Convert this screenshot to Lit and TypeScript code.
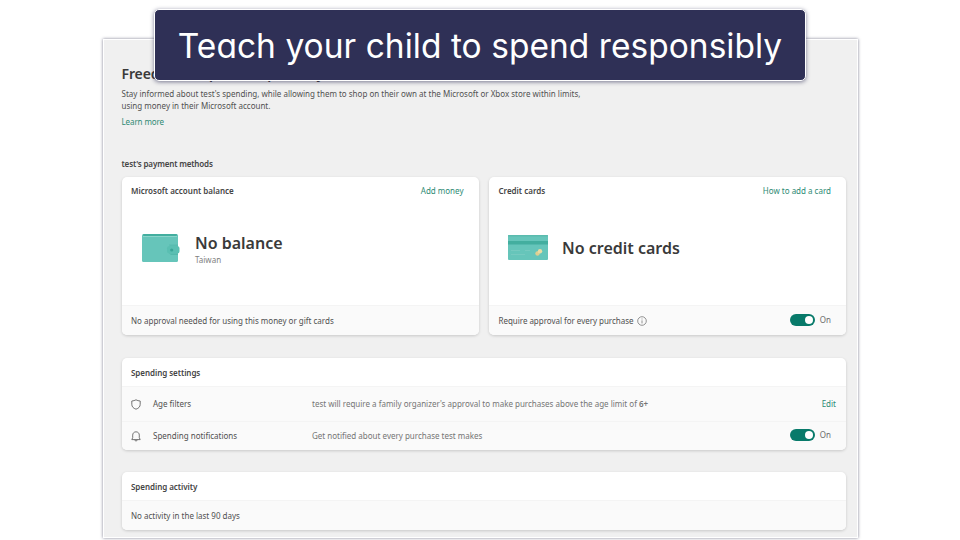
import { css, html, LitElement, svg } from 'lit';
import { customElement, property } from 'lit/decorators.js';

const wallet = svg`
    <svg width="38" height="30" viewBox="0 0 38 30">
        <rect x="0" y="1" width="36" height="28" rx="1.5" fill="#66c5ba"/>
        <rect x="1" y="1" width="34" height="2" rx="1" fill="#43ae9f"/>
        <rect x="1" y="3" width="34" height="1" fill="#8ad5cb"/>
        <path d="M27 11.5h9v2.5h-8z" fill="#58bcb0"/>
        <rect x="25" y="13" width="12.5" height="7.5" rx="2.5" fill="#5abfb2"/>
        <circle cx="29.7" cy="17" r="1.6" fill="#3aa598"/>
        <path d="M27 20.5h9v1.5h-7z" fill="#52b8ab"/>
    </svg>`;

const creditCard = svg`
    <svg width="40" height="25" viewBox="0 0 40 25">
        <rect width="40" height="25" rx="1" fill="#66c5ba"/>
        <rect y="0" width="40" height="1.5" rx=".7" fill="#5abbae"/>
        <rect y="6" width="40" height="3.5" fill="#43ae9f"/>
        <path d="M3 15.5h9M17 15.5h5M3 19.5h14" stroke="#7accc2" stroke-width=".8"/>
        <circle cx="29.5" cy="18.5" r="2.2" fill="#dfcf91"/>
        <circle cx="32" cy="16.2" r="2.2" fill="#eadca4"/>
    </svg>`;

const shield = svg`
    <svg width="10" height="11" viewBox="0 0 10 11" fill="none" stroke="#666" stroke-width=".9">
        <path d="M5 .8C6.2 1.5 7.6 1.9 9.2 2v3.3C9.2 7.7 7.7 9.3 5 10.2 2.3 9.3.8 7.7.8 5.3V2C2.4 1.9 3.8 1.5 5 .8z"/>
    </svg>`;

const bell = svg`
    <svg width="10" height="11" viewBox="0 0 10 11" fill="none" stroke="#666" stroke-width=".9" stroke-linejoin="round">
        <path d="M5 .8C3 .8 1.7 2.3 1.7 4.1v2.6L.8 8.6h8.4l-.9-1.9V4.1C8.3 2.3 7 .8 5 .8z"/>
        <path d="M3.7 8.8c.2.8.6 1.2 1.3 1.2s1.1-.4 1.3-1.2"/>
    </svg>`;

const info = svg`
    <svg width="10" height="10" viewBox="0 0 10 10" fill="none" stroke="#777" stroke-width=".8">
        <circle cx="5" cy="5" r="4.3"/>
        <path d="M5 4.4v3M5 2.5v.9"/>
    </svg>`;

@customElement('app-toggle')
export class AppToggle extends LitElement {

    @property()
    label = 'On';

    static styles = css`
            :host {
                display: flex;
                align-items: center;
                gap: 5px;
                color: #6b6b6b;
            }
            .track {
                display: flex;
                justify-content: flex-end;
                align-items: center;
                width: 24.5px;
                height: 12px;
                padding-right: 2px;
                border-radius: 6px;
                background: #087a6a;
                box-sizing: border-box;
            }
            .knob {
                width: 8px;
                height: 8px;
                border-radius: 50%;
                background: #fff;
            }
            `;

    render() {
        return html`
            <div class="track"><div class="knob"></div></div>
            <span>${this.label}</span>
        `;
    }
}

@customElement('app-root')
export class AppRoot extends LitElement {

    static styles = css`
            :host {
                display: flow-root;
                position: relative;
                width: 960px;
                height: 540px;
                overflow: hidden;
                background: #fff;
                color: #505050;
                font: 8px/12px "Noto Sans", "Open Sans", sans-serif;
                white-space: nowrap;
            }
            .banner {
                position: absolute;
                top: 9px;
                left: 154px;
                display: flex;
                align-items: center;
                justify-content: center;
                width: 652px;
                height: 72px;
                padding-top: 1px;
                border: 1px solid #fff;
                border-radius: 5px;
                background: #2f3056;
                box-shadow: 0 1px 4px rgba(40, 40, 80, .6);
                box-sizing: border-box;
                color: #fff;
                font: 33.5px/44px Inter, sans-serif;
                font-feature-settings: "cv11";
                letter-spacing: .03px;
            }
            .panel {
                width: 755px;
                height: 499px;
                margin: 39px 0 0 102.5px;
                padding: 26px 10px 0 18px;
                border: 1px solid #fff;
                background: #f0f0f0;
                box-shadow: 0 0 3px rgba(40, 40, 70, .6);
                box-sizing: border-box;
            }
            h1 {
                margin: 0;
                color: #3a3a3a;
                font-size: 14px;
                line-height: 16px;
                font-weight: 600;
                letter-spacing: -.12px;
            }
            .intro {
                margin: 6px 0 0;
                line-height: 11.5px;
            }
            .link {
                color: #2d8a74;
            }
            .learn {
                display: block;
                margin-top: 5px;
                letter-spacing: -.1px;
            }
            h2, h3 {
                margin: 0;
                font-size: 8px;
                line-height: 12px;
                font-weight: 600;
                color: #454545;
            }
            .methods-title {
                margin: 30px 0 7px;
                letter-spacing: -.15px;
            }
            .methods {
                display: grid;
                grid-template-columns: 357px 357px;
                gap: 10.5px;
            }
            .card {
                width: 724.5px;
                border-radius: 5px;
                background: #fff;
                box-shadow: 0 1px 3px rgba(0, 0, 0, .17);
                overflow: hidden;
            }
            .methods .card {
                display: flex;
                flex-direction: column;
                width: auto;
                height: 158px;
            }
            .head {
                display: flex;
                justify-content: space-between;
                padding: 8px 15px 0 9.5px;
            }
            .body {
                display: flex;
                flex: 1;
                align-items: center;
                gap: 15.5px;
                padding: 0 20px 7px;
            }
            .body.cards {
                gap: 14px;
                padding-left: 19px;
            }
            .body svg {
                display: block;
            }
            .balance {
                padding-top: 4px;
            }
            .amount {
                color: #3a3a3a;
                font-size: 16px;
                line-height: 20px;
                font-weight: 600;
            }
            .region {
                margin-top: 1px;
                color: #808080;
            }
            .foot {
                display: flex;
                align-items: center;
                height: 30px;
                padding: 0 15px 0 9.5px;
                border-top: 1px solid #f4f4f4;
                background: #fafafa;
                box-sizing: border-box;
            }
            .foot svg {
                margin-left: 4px;
            }
            .approval {
                letter-spacing: -.03px;
            }
            app-toggle {
                margin: 0 0 2px auto;
            }
            .settings {
                margin-top: 23px;
            }
            .activity {
                margin-top: 22px;
            }
            .title {
                height: 28px;
                padding: 9px 9.5px 0;
                box-sizing: border-box;
                letter-spacing: -.05px;
            }
            .row {
                display: grid;
                grid-template-columns: 22px 159px 1fr auto;
                align-items: center;
                height: 35px;
                padding: 0 10px 0 9.5px;
                border-top: 1px solid #f4f4f4;
                background: #fafafa;
                box-sizing: border-box;
            }
            .row svg {
                display: block;
            }
            .row.short {
                height: 29px;
                padding-right: 15px;
            }
            .muted {
                color: #757575;
            }
            b {
                font-weight: 600;
            }
            `;

    render() {
        return html`
            <main class="panel">
                <h1>Freedom to spend responsibly</h1>
                <p class="intro">
                    Stay informed about test's spending, while allowing them to shop on their own at the Microsoft or Xbox store within limits,<br>
                    using money in their Microsoft account.
                </p>
                <span class="link learn">Learn more</span>

                <h2 class="methods-title">test's payment methods</h2>
                <div class="methods">
                    <section class="card">
                        <div class="head"><h3>Microsoft account balance</h3><span class="link">Add money</span></div>
                        <div class="body">
                            ${wallet}
                            <div class="balance">
                                <div class="amount">No balance</div>
                                <div class="region">Taiwan</div>
                            </div>
                        </div>
                        <div class="foot">No approval needed for using this money or gift cards</div>
                    </section>
                    <section class="card">
                        <div class="head"><h3>Credit cards</h3><span class="link">How to add a card</span></div>
                        <div class="body cards">
                            ${creditCard}
                            <div class="amount">No credit cards</div>
                        </div>
                        <div class="foot"><span class="approval">Require approval for every purchase</span>${info}<app-toggle></app-toggle></div>
                    </section>
                </div>

                <section class="card settings">
                    <h3 class="title">Spending settings</h3>
                    <div class="row">
                        ${shield}
                        <span>Age filters</span>
                        <span class="muted">test will require a family organizer's approval to make purchases above the age limit of <b>6+</b></span>
                        <span class="link">Edit</span>
                    </div>
                    <div class="row short">
                        ${bell}
                        <span>Spending notifications</span>
                        <span class="muted">Get notified about every purchase test makes</span>
                        <app-toggle></app-toggle>
                    </div>
                </section>

                <section class="card activity">
                    <h3 class="title">Spending activity</h3>
                    <div class="foot">No activity in the last 90 days</div>
                </section>
            </main>
            <div class="banner">Teach your child to spend responsibly</div>
        `;
    }
}
